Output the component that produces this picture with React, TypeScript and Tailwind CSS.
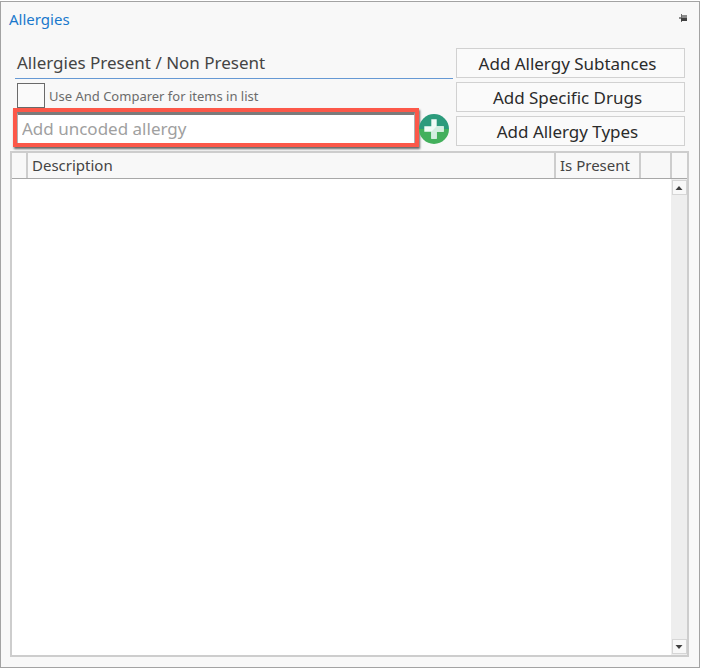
import type { ReactNode } from 'react';

const ACTIONS = [
  { label: 'Add Allergy Subtances', spacing: 'tracking-[-0.02px]' },
  { label: 'Add Specific Drugs', spacing: 'tracking-[-0.02px]' },
  { label: 'Add Allergy Types', spacing: 'tracking-[-0.02px]' },
];

function PinIcon() {
  return (
    <svg width="8" height="8" viewBox="0 0 8 8" shapeRendering="crispEdges">
      <rect x="0" y="3" width="2" height="2" fill="#8c8c8c" />
      <rect x="2" y="0" width="1" height="8" fill="#6b6b6b" />
      <rect x="3" y="1" width="5" height="3" fill="#8c8c8c" />
      <rect x="2" y="4" width="6" height="3" fill="#404040" />
    </svg>
  );
}

function PlusIcon() {
  return (
    <svg width="30" height="30" viewBox="0 0 30 30">
      <path d="M0 15a15 15 0 0 1 30 0z" fill="#2c9b7c" />
      <path d="M0 15a15 15 0 0 0 30 0z" fill="#43b05c" />
      <path d="M12.3 5.3h5.4v7h7v5.4h-7v7h-5.4v-7h-7v-5.4h7z" fill="#f0fbf6" />
      <path d="M17.7 12.3h7v5.4h-7v7h-5.4v-7z" fill="#d3eee0" />
    </svg>
  );
}

function ScrollButton({ children }: { children: ReactNode }) {
  return (
    <button className="flex h-[15px] w-[15px] items-center justify-center border border-[#d6d6d6] bg-[#f8f8f8]">
      <svg width="8" height="4" viewBox="0 0 8 4" fill="#404040">
        {children}
      </svg>
    </button>
  );
}

export default function App() {
  return (
    <div className="h-[668px] w-[702px] bg-white pt-px font-['Noto_Sans','Open_Sans',sans-serif]">
      <div className="flex h-[667px] w-[700px] flex-col border border-[#a3a3a3] bg-[#f8f8f8]">
        <header className="flex h-[46px] shrink-0 items-start justify-between pt-[6px] pr-[12px] pl-[8px]">
          <h1 className="text-[15px] leading-[22px] text-[#1a78cc]">Allergies</h1>
          <div className="pt-[6px]">
            <PinIcon />
          </div>
        </header>

        <div className="flex h-[103px] shrink-0 pl-[12px]">
          <div className="w-[440px]">
            <h2 className="ml-[2px] h-[31px] border-b border-[#6699d4] pl-[2px] text-[17px] leading-[30px] text-[#444444]">
              Allergies Present / Non Present
            </h2>
            <label className="flex h-[29px] items-start pt-[4px] pl-[4px]">
              <span className="h-[25px] w-[28px] border border-[#6a6a6a] bg-[#fafafa]" />
              <span className="pl-[4px] text-[13px] leading-[26px] text-[#6b6b6b]">
                Use And Comparer for items in list
              </span>
            </label>
            <div className="flex items-start">
              <div className="h-[39px] w-[406px] border-4 border-[#fc5849] shadow-[1px_2px_2px_#666666]">
                <div className="h-full border-t-[3px] border-r border-l border-t-[#7b7b7b] border-r-[#b0b0b0] border-l-[#b0b0b0] bg-white">
                  <input
                    placeholder="Add uncoded allergy"
                    className="block h-[28px] w-full pl-[4px] text-[17px] leading-[28px] outline-none placeholder:text-[#a0a0a0]"
                  />
                </div>
              </div>
              <button className="mt-[6px]">
                <PlusIcon />
              </button>
            </div>
          </div>
          <div className="ml-[3px] flex w-[229px] flex-col gap-[4px]">
            {ACTIONS.map(({ label, spacing }) => (
              <button
                key={label}
                className={`h-[30px] border border-[#d1d1d1] bg-[#fafafa] pt-[2px] pr-[6px] text-[17px] leading-[26px] text-[#2b2b2b] ${spacing}`}
              >
                {label}
              </button>
            ))}
          </div>
        </div>

        <div className="ml-[9px] flex h-[506px] w-[679px] shrink-0 flex-col border-2 border-[#cdcdcd] bg-white">
          <div className="flex h-[26px] shrink-0 border-b border-[#a8a8a8] bg-[#f8f8f8] text-[15px] leading-[25px] text-[#444444]">
            <div className="w-[16px] border-r-2 border-[#cdcdcd]" />
            <div className="w-[528px] border-r-2 border-[#cdcdcd] pl-[4px]">Description</div>
            <div className="w-[85px] border-r-2 border-[#cdcdcd] pl-[4px]">Is Present</div>
            <div className="w-[31px] border-r-2 border-[#cdcdcd]" />
          </div>
          <div className="flex grow justify-end">
            <div className="flex w-[16px] flex-col items-center justify-between bg-[#eeeeee] py-px">
              <ScrollButton>
                <path d="M0.5 4L4 0L7.5 4z" />
              </ScrollButton>
              <ScrollButton>
                <path d="M0.5 0L4 4L7.5 0z" />
              </ScrollButton>
            </div>
          </div>
        </div>
      </div>
    </div>
  );
}
